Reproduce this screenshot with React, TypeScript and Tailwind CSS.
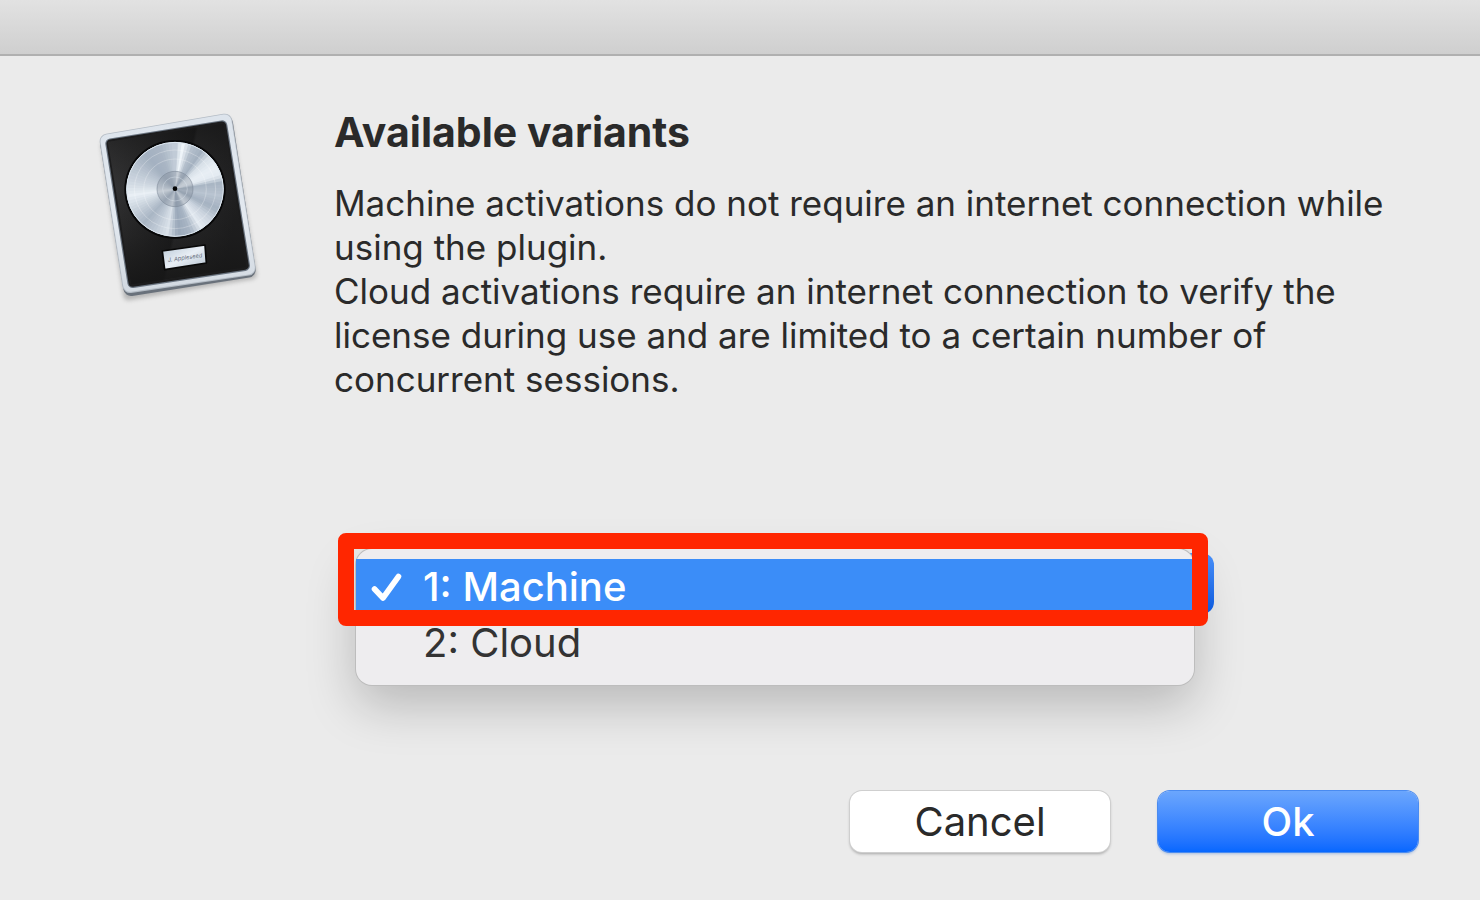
import React, { useState } from 'react';

const variants = [
  { id: 1, name: 'Machine' },
  { id: 2, name: 'Cloud' },
];

// brightness of the disc by angle, clockwise from the top
const discStops: [number, number][] = [
  [0, 0.6],
  [10, 1],
  [22, 0.45],
  [34, 0.3],
  [46, 0.8],
  [60, 0.95],
  [72, 0.9],
  [82, 0.35],
  [98, 0.5],
  [116, 0.3],
  [130, 0.65],
  [146, 0.9],
  [160, 0.35],
  [176, 0.2],
  [190, 0.8],
  [206, 0.55],
  [222, 0.35],
  [240, 0.6],
  [262, 0.95],
  [280, 0.7],
  [300, 0.5],
  [320, 0.3],
  [340, 0.35],
  [360, 0.6],
];

const WEDGES = 90;

const brightnessAt = (angle: number) => {
  for (let i = 1; i < discStops.length; i++) {
    const [a0, v0] = discStops[i - 1];
    const [a1, v1] = discStops[i];
    if (angle <= a1) return v0 + ((v1 - v0) * (angle - a0)) / (a1 - a0);
  }
  return 0.5;
};

const wedgePath = (from: number, to: number) => {
  const point = (deg: number) => {
    const rad = (deg * Math.PI) / 180;
    return `${285 + 146 * Math.sin(rad)} ${280 - 142 * Math.cos(rad)}`;
  };
  return `M285 280 L${point(from)} L${point(to)} Z`;
};

const AppIcon: React.FC = () => {
  const wedges = Array.from({ length: WEDGES }, (_, i) => {
    const step = 360 / WEDGES;
    const v = brightnessAt((i + 0.5) * step);
    const fill = `rgb(${Math.round(132 + 106 * v)}, ${Math.round(148 + 96 * v)}, ${Math.round(168 + 81 * v)})`;
    return <path key={i} d={wedgePath(i * step, (i + 1) * step + 3)} fill={fill} />;
  });

  return (
    <svg viewBox="0 0 600 660" className="h-[220px] w-[200px]" role="img" aria-label="Application icon">
      <defs>
        <linearGradient id="frame" x1="0" y1="0" x2="0" y2="1">
          <stop offset="0" stopColor="#dde4ec" />
          <stop offset="0.6" stopColor="#e3e9f0" />
          <stop offset="1" stopColor="#d3dae2" />
        </linearGradient>
        <linearGradient id="panel" x1="0" y1="0" x2="1" y2="0.25">
          <stop offset="0" stopColor="#3a3a3b" />
          <stop offset="0.6" stopColor="#1c1c1d" />
          <stop offset="0.62" stopColor="#2b2b2c" />
          <stop offset="1" stopColor="#1f1f20" />
        </linearGradient>
        <linearGradient id="panelShade" x1="0" y1="0" x2="0" y2="1">
          <stop offset="0" stopColor="#111" stopOpacity="0.6" />
          <stop offset="0.4" stopColor="#161616" stopOpacity="0" />
          <stop offset="0.7" stopColor="#161616" stopOpacity="0.3" />
          <stop offset="1" stopColor="#161616" stopOpacity="0.9" />
        </linearGradient>
        <linearGradient id="plate" x1="0" y1="0" x2="1" y2="1">
          <stop offset="0" stopColor="#b9c8d6" />
          <stop offset="0.5" stopColor="#e8eef5" />
          <stop offset="1" stopColor="#b3c0ce" />
        </linearGradient>
        <clipPath id="disc">
          <ellipse cx="285" cy="280" rx="146" ry="142" />
        </clipPath>
        <filter id="soft" x="-10%" y="-10%" width="120%" height="120%">
          <feGaussianBlur stdDeviation="7" />
        </filter>
        <filter id="sheen" x="-10%" y="-10%" width="120%" height="120%">
          <feGaussianBlur stdDeviation="2" />
        </filter>
      </defs>
      <path d="M78 150 L440 82 L515 535 L145 598 Z" fill="#777" opacity="0.45" stroke="#777" strokeWidth="30" strokeLinejoin="round" filter="url(#soft)" />
      <path d="M84 146 L436 82 L504 522 L153 577 Z" fill="#69717b" stroke="#69717b" strokeWidth="46" strokeLinejoin="round" />
      <path d="M82 136 L434 76 L504 516 L150 568 Z" fill="#b4bcc5" stroke="#b4bcc5" strokeWidth="46" strokeLinejoin="round" />
      <path d="M82 136 L434 76 L504 515 L150 567 Z" fill="url(#frame)" stroke="url(#frame)" strokeWidth="41" strokeLinejoin="round" />
      <path d="M92 143 L426 89 L494 509 L158 560 Z" fill="#68727e" stroke="#68727e" strokeWidth="32" strokeLinejoin="round" />
      <path d="M92 143 L426 89 L494 509 L158 560 Z" fill="#1c1c1d" stroke="#1c1c1d" strokeWidth="25" strokeLinejoin="round" />
      <path d="M84 138 L432 82 L500 514 L153 566 Z" fill="url(#panel)" />
      <path d="M84 138 L432 82 L500 514 L153 566 Z" fill="url(#panelShade)" />
      <ellipse cx="285" cy="280" rx="152" ry="148" fill="#070708" />
      <g clipPath="url(#disc)">
        <ellipse cx="285" cy="280" rx="146" ry="142" fill="#b4c1cf" />
        <g filter="url(#sheen)">{wedges}</g>
      </g>
      <g fill="none">
        <ellipse cx="285" cy="280" rx="145" ry="141" stroke="#dce6ef" strokeWidth="3" />
        <ellipse cx="285" cy="280" rx="122" ry="118" stroke="#fff" strokeOpacity="0.25" strokeWidth="3" />
        <ellipse cx="285" cy="280" rx="94" ry="91" stroke="#fff" strokeOpacity="0.25" strokeWidth="3" />
      </g>
      <ellipse cx="285" cy="279" rx="54" ry="53" fill="#737f8b" fillOpacity="0.3" stroke="#7e8b99" strokeOpacity="0.6" strokeWidth="3" />
      <ellipse cx="285" cy="279" rx="37" ry="36" fill="none" stroke="#e4edf5" strokeOpacity="0.35" strokeWidth="3" />
      <circle cx="285" cy="278" r="7" fill="#050505" />
      <path d="M247 465 L375 447 L379 501 L254 521 Z" fill="url(#plate)" stroke="#080808" strokeWidth="5" strokeLinejoin="round" />
      <text x="264" y="498" fontSize="17" fontFamily="Inter, sans-serif" fontStyle="italic" fill="#5f6b78" transform="rotate(-8 264 498)">
        J. Appleseed
      </text>
    </svg>
  );
};

const App: React.FC = () => {
  const [selected, setSelected] = useState(1);

  return (
    <div
      role="dialog"
      aria-labelledby="dialog-title"
      className="flex min-h-screen flex-col bg-[#ebebeb] font-['Inter','Liberation_Sans',sans-serif] text-[#2a2a2a]"
    >
      <header className="h-14 border-b-2 border-[#b0b0b0] bg-linear-to-b from-[#e2e2e2] to-[#cfcfcf]" />

      <main className="flex flex-1 gap-[54px] pt-10 pr-20 pl-20">
        <div className="shrink-0">
          <AppIcon />
        </div>

        <div className="min-w-0 flex-1 pt-3">
          <h1 id="dialog-title" className="text-[41px] leading-12 font-bold">
            Available variants
          </h1>
          <div className="mt-[25px] text-[35px] leading-11">
            <p>Machine activations do not require an internet connection while using the plugin.</p>
            <p>
              Cloud activations require an internet connection to verify the license during use and are limited to a
              certain number of concurrent sessions.
            </p>
          </div>

          <div className="relative mt-[152px] mr-[186px] ml-[22px]">
            <select
              aria-label="Variant"
              value={selected}
              onChange={(e) => setSelected(Number(e.target.value))}
              className="block h-[61px] w-full appearance-none rounded-xl bg-linear-to-b from-[#4a92fb] to-[#0a5eea] px-16 text-base text-transparent"
            >
              {variants.map((variant) => (
                <option key={variant.id} value={variant.id}>
                  {variant.id}: {variant.name}
                </option>
              ))}
            </select>

            {/* open menu */}
            <div
              role="listbox"
              aria-label="Variants"
              className="absolute -top-1 right-5 left-0 rounded-2xl bg-[#eeedef] pt-2.5 pb-3.5 shadow-[0_0_0_1px_#bdbdbd,0_20px_50px_rgba(0,0,0,0.22)]"
            >
              {variants.map((variant) => (
                <button
                  key={variant.id}
                  type="button"
                  role="option"
                  aria-selected={variant.id === selected}
                  onClick={() => setSelected(variant.id)}
                  className={`flex h-14 w-full items-center gap-5 pl-[15px] text-left text-[40px] leading-12 ${
                    variant.id === selected ? 'bg-[#3b8df8] font-medium text-white' : 'text-[#333]'
                  }`}
                >
                  <svg viewBox="0 0 32 30" className="h-[30px] w-8" aria-hidden="true">
                    {variant.id === selected && (
                      <path d="M3.5 17 L12 26 L27.5 4.5" fill="none" stroke="#fff" strokeWidth="5.6" strokeLinecap="round" strokeLinejoin="round" />
                    )}
                  </svg>
                  <span>
                    {variant.id}: {variant.name}
                  </span>
                </button>
              ))}
            </div>

            {/* highlight frame */}
            <div className="pointer-events-none absolute -top-5 right-1.5 -left-[18px] h-[93px] rounded-lg border-16 border-[#ff2600]" />
          </div>
        </div>
      </main>

      <footer className="flex justify-end gap-12 pr-[62px] pb-12 text-[40px] leading-12">
        <button
          type="button"
          className="h-[61px] w-65 rounded-xl bg-white shadow-[0_0_0_1px_#cfcfcf,0_2px_3px_rgba(0,0,0,0.3)]"
        >
          Cancel
        </button>
        <button
          type="button"
          className="h-[61px] w-65 rounded-xl bg-linear-to-b from-[#6ba6fd] to-[#0567ff] font-medium text-white shadow-[0_0_0_1px_#4a8bf0,0_2px_3px_rgba(0,80,200,0.3)]"
        >
          Ok
        </button>
      </footer>
    </div>
  );
};

export default App;
